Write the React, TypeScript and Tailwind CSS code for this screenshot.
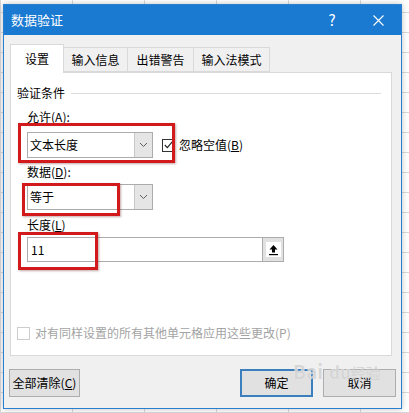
const FONT = "font-['Noto_Sans_CJK_SC','Noto_Sans',sans-serif]";

function Chevron() {
  return (
    <svg width="9" height="6" viewBox="0 0 9 6" fill="none">
      <path d="M1 1L4.5 4.5L8 1" stroke="#606060" strokeWidth="1" />
    </svg>
  );
}

function Combo({ value }: { value: string }) {
  return (
    <div className="flex h-[26px] w-[126px] border border-[#acacac] bg-white">
      <div className="flex flex-1 items-center pl-[2px] text-[12px] text-black">{value}</div>
      <div className="flex w-[18px] items-center justify-center border-l border-[#c8c8c8] bg-[#e5e5e5]">
        <Chevron />
      </div>
    </div>
  );
}

function Label({ text, accel, colon = true }: { text: string; accel: string; colon?: boolean }) {
  return (
    <div className="h-[16px] text-[12px] leading-[16px] text-black">
      {text}(<span className="underline">{accel}</span>){colon ? ':' : ''}
    </div>
  );
}

function RedBox({ className }: { className: string }) {
  return <div className={`absolute border-[3px] border-[#d21a1d] shadow-[1px_1px_2px_rgba(80,0,0,0.35)] ${className}`} />;
}

export default function App() {
  return (
    <div
      className={`h-[413px] w-[409px] overflow-hidden bg-white bg-[linear-gradient(to_right,#d8d8d8_1px,transparent_1px),linear-gradient(to_bottom,#d8d8d8_1px,transparent_1px)] bg-[size:72px_20px] bg-[position:0px_-8px] pl-[3px] pt-[4px] ${FONT}`}
    >
      <div className="flex h-[405px] w-[399px] flex-col border border-[#2a7fd0] bg-[#f0f0f0] shadow-[0_0_6px_rgba(0,0,0,0.25)]">
        {/* title bar */}
        <div className="flex h-[30px] items-center bg-[#1a7ad2] text-white">
          <div className="flex-1 pl-[7px] text-[13px]">数据验证</div>
          <div className="flex h-full w-[46px] items-center justify-center text-[15px]">?</div>
          <div className="flex h-full w-[46px] items-center justify-center">
            <svg width="11" height="11" viewBox="0 0 11 11">
              <path d="M0.5 0.5L10.5 10.5M10.5 0.5L0.5 10.5" stroke="#ffffff" strokeWidth="1.1" />
            </svg>
          </div>
        </div>

        <div className="flex flex-1 flex-col px-[6px] pt-[9px]">
          {/* tabs */}
          <div className="flex h-[28px] items-end text-[12px] text-black">
            <div className="relative z-10 -mb-px flex h-[29px] w-[54px] items-center justify-center border border-b-0 border-[#d9d9d9] bg-white">
              设置
            </div>
            <div className="flex h-[25px] w-[64px] items-center justify-center border-y border-r border-[#d9d9d9] bg-[#f0f0f0]">
              输入信息
            </div>
            <div className="flex h-[25px] w-[66px] items-center justify-center border-y border-r border-[#d9d9d9] bg-[#f0f0f0]">
              出错警告
            </div>
            <div className="flex h-[25px] w-[76px] items-center justify-center border-y border-r border-[#d9d9d9] bg-[#f0f0f0]">
              输入法模式
            </div>
          </div>

          {/* panel */}
          <div className="relative flex h-[284px] w-[382px] flex-col border border-[#d9d9d9] bg-white pb-[13px]">
            <div className="mt-[12px] flex h-[16px] items-center pl-[6px] pr-[10px]">
              <span className="text-[12px] text-black">验证条件</span>
              <div className="ml-[6px] h-px flex-1 bg-[#dcdcdc]" />
            </div>

            <div className="flex flex-col pl-[16px]">
              <div className="mt-[8px]">
                <Label text="允许" accel="A" />
              </div>
              <div className="mt-[7px] flex items-center">
                <Combo value="文本长度" />
                <div className="ml-[9px] flex h-[13px] w-[13px] items-center justify-center border border-[#333333] bg-white">
                  <svg width="9" height="8" viewBox="0 0 9 8" fill="none">
                    <path d="M0.8 4L3.3 6.6L8.2 0.8" stroke="#222222" strokeWidth="1.1" />
                  </svg>
                </div>
                <div className="ml-[4px] text-[12px] text-black">
                  忽略空值(<span className="underline">B</span>)
                </div>
              </div>

              <div className="mt-[6px]">
                <Label text="数据" accel="D" />
              </div>
              <div className="mt-[4px]">
                <Combo value="等于" />
              </div>

              <div className="mt-[7px]">
                <Label text="长度" accel="L" colon={false} />
              </div>
              <div className="mt-[4px] flex h-[25px] w-[257px] items-center border border-[#acacac] bg-white">
                <div className="flex-1 pl-[3px] text-[12px] text-black">11</div>
                <div className="flex h-[23px] w-[21px] items-center justify-center border-l border-[#adadad] bg-[#e1e1e1]">
                  <div className="flex h-[15px] w-[15px] items-center justify-center bg-white">
                    <svg width="11" height="12" viewBox="0 0 11 12">
                      <path d="M5.5 1L1.5 5.5H4V8.5H7V5.5H9.5Z" fill="#000000" />
                      <rect x="1" y="10" width="9" height="1.2" fill="#000000" />
                    </svg>
                  </div>
                </div>
              </div>
            </div>

            <div className="mt-auto flex items-center pl-[6px]">
              <div className="h-[13px] w-[13px] border border-[#cccccc] bg-white" />
              <div className="ml-[5px] text-[12px] text-[#a3a3a3]">对有同样设置的所有其他单元格应用这些更改(P)</div>
            </div>

            <RedBox className="left-[7px] top-[50px] h-[40px] w-[157px]" />
            <RedBox className="left-[11px] top-[110px] h-[33px] w-[98px]" />
            <RedBox className="left-[7px] top-[159px] h-[38px] w-[80px]" />
          </div>

          {/* buttons */}
          <div className="relative mt-[13px] flex items-center text-[12px] text-black">
            <div className="ml-[-1px] flex h-[28px] w-[71px] items-center justify-center border border-[#adadad] bg-[#e1e1e1]">
              全部清除(<span className="underline">C</span>)
            </div>
            <div className="ml-auto flex h-[28px] w-[73px] items-center justify-center border-2 border-[#3b7fbf] bg-[#e1e1e1]">
              确定
            </div>
            <div className="ml-[10px] mr-[-1px] flex h-[28px] w-[73px] items-center justify-center border border-[#adadad] bg-[#e1e1e1]">
              取消
            </div>
            <div className="pointer-events-none absolute left-[283px] top-[-8px] flex items-end text-[#d4d4d4] opacity-90">
              <span className="text-[19px] font-bold leading-none [text-shadow:0_0_1px_#ffffff]">Bai</span>
              <span className="ml-[6px] text-[17px] font-bold leading-none [text-shadow:0_0_1px_#ffffff]">du</span>
              <span className="text-[15px] leading-none">经验</span>
            </div>
          </div>
        </div>
      </div>
    </div>
  );
}
